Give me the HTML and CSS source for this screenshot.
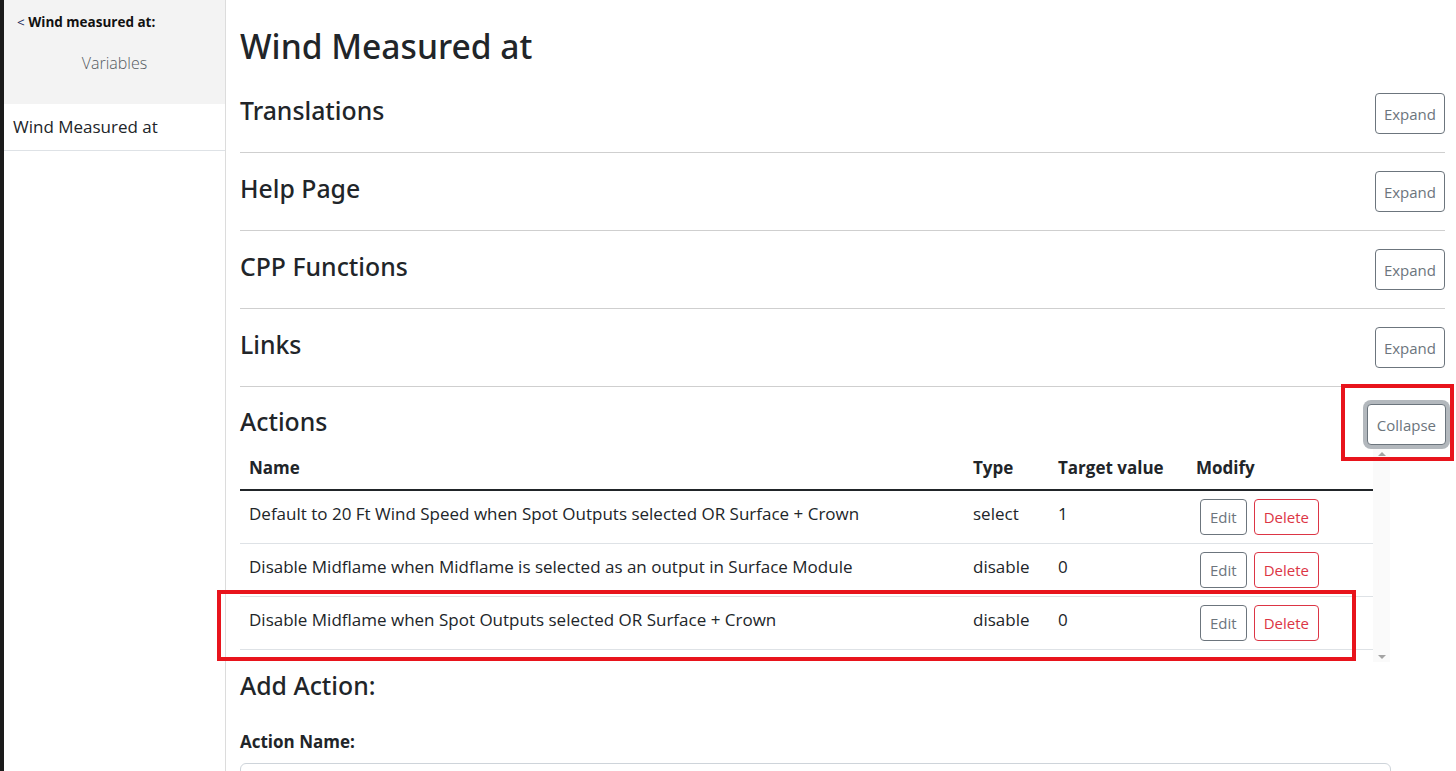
FILE: index.html
```html
<!DOCTYPE html>
<html lang="en">
<head>
<meta charset="utf-8">
<title>Wind Measured at</title>
<link rel="stylesheet" href="styles.css">
</head>
<body>
<div class="app">
  <div class="edge"></div>
  <aside class="sidebar">
    <div class="side-head">
      <div class="back"><span class="lt">&lt;</span> Wind measured at:</div>
      <div class="side-title">Variables</div>
    </div>
    <div class="side-item">Wind Measured at</div>
  </aside>
  <main class="main">
    <h1 class="page-title">Wind Measured at</h1>
    <section class="sec">
      <h3 class="sec-title">Translations</h3>
      <button class="btn btn-outline">Expand</button>
    </section>
    <section class="sec">
      <h3 class="sec-title">Help Page</h3>
      <button class="btn btn-outline">Expand</button>
    </section>
    <section class="sec">
      <h3 class="sec-title">CPP Functions</h3>
      <button class="btn btn-outline">Expand</button>
    </section>
    <section class="sec">
      <h3 class="sec-title">Links</h3>
      <button class="btn btn-outline">Expand</button>
    </section>
    <section class="sec sec-open">
      <div class="sec-head">
        <h3 class="sec-title">Actions</h3>
        <button class="btn btn-outline btn-focus">Collapse</button>
      </div>
      <div class="table-wrap">
        <div class="table-scroll">
          <table class="tbl">
            <thead>
              <tr>
                <th class="c-name">Name</th>
                <th class="c-type">Type</th>
                <th class="c-target">Target value</th>
                <th class="c-mod">Modify</th>
              </tr>
            </thead>
            <tbody>
              <tr>
                <td>Default to 20 Ft Wind Speed when Spot Outputs selected OR Surface + Crown</td>
                <td>select</td>
                <td>1</td>
                <td><div class="mods"><button class="btn btn-sm btn-outline">Edit</button><button class="btn btn-sm btn-danger">Delete</button></div></td>
              </tr>
              <tr>
                <td>Disable Midflame when Midflame is selected as an output in Surface Module</td>
                <td>disable</td>
                <td>0</td>
                <td><div class="mods"><button class="btn btn-sm btn-outline">Edit</button><button class="btn btn-sm btn-danger">Delete</button></div></td>
              </tr>
              <tr>
                <td>Disable Midflame when Spot Outputs selected OR Surface + Crown</td>
                <td>disable</td>
                <td>0</td>
                <td><div class="mods"><button class="btn btn-sm btn-outline">Edit</button><button class="btn btn-sm btn-danger">Delete</button></div></td>
              </tr>
            </tbody>
          </table>
        </div>
        <div class="sbar">
          <span class="arrow arrow-up"></span>
          <span class="arrow arrow-down"></span>
        </div>
      </div>
    </section>
    <h3 class="add-title">Add Action:</h3>
    <label class="lbl" for="actname">Action Name:</label>
    <input class="input" id="actname" type="text">
  </main>
  <div class="mark mark-collapse"></div>
  <div class="mark mark-row"></div>
</div>
</body>
</html>
```

FILE: styles.css
```css
* { box-sizing: border-box; }
html, body { margin: 0; padding: 0; }
body {
  font-family: "Open Sans", "Noto Sans", "Liberation Sans", sans-serif;
  font-size: 17px;
  color: #212529;
  background: #fff;
  overflow: hidden;
}
.app {
  position: relative;
  display: flex;
  height: 771px;
  overflow: hidden;
}
.edge {
  width: 4px;
  flex: none;
  background: #1b1b1b;
}
.sidebar {
  width: 222px;
  flex: none;
  border-right: 1px solid #dcdcdc;
  background: #fff;
}
.side-head {
  height: 104px;
  background: #f3f3f3;
  padding-top: 12px;
}
.back {
  font-size: 13.5px;
  font-weight: 700;
  padding-left: 13px;
  line-height: 20px;
  color: #111;
}
.lt { color: #1a2a5a; font-weight: 400; }
.side-title {
  text-align: center;
  font-size: 16px;
  font-weight: 300;
  color: #555b61;
  margin-top: 20px;
  line-height: 22px;
}
.side-item {
  height: 47px;
  border-bottom: 1px solid #dee2e6;
  padding: 11px 9px;
  font-size: 17px;
  line-height: 24px;
}
.main {
  flex: 1;
  padding: 26px 11px 0 14px;
  min-width: 0;
}
.page-title {
  font-family: "Noto Sans", "Open Sans", sans-serif;
  font-size: 33.6px;
  font-weight: 500;
  line-height: 41px;
  margin: 0 0 8px;
}
.sec {
  display: flex;
  justify-content: space-between;
  align-items: flex-start;
  padding: 18px 0 18px;
  border-bottom: 1px solid #cfcfcf;
}
.sec-title {
  font-family: "Noto Sans", "Open Sans", sans-serif;
  font-size: 24.8px;
  font-weight: 500;
  line-height: 34px;
  margin: 0;
}
.btn {
  font-family: inherit;
  background: #fff;
  border: 1px solid #6c757d;
  color: #6c757d;
  border-radius: 4px;
  font-size: 15px;
  height: 41px;
  padding: 0 8px;
  cursor: pointer;
}
.btn-focus {
  box-shadow: 0 0 0 4px #b3b8bd;
  margin-right: -1px;
  padding: 0 9px;
}
.sec-open {
  display: block;
  border-bottom: none;
  padding: 17px 0 0;
}
.sec-head {
  display: flex;
  justify-content: space-between;
  align-items: flex-start;
}
.table-wrap {
  display: flex;
  width: 1150px;
  height: 213px;
  margin-top: 4px;
}
.table-scroll {
  flex: 1;
  overflow: hidden;
}
.tbl {
  width: 100%;
  border-collapse: collapse;
  table-layout: fixed;
}
.tbl th {
  text-align: left;
  font-weight: 700;
  font-size: 17px;
  padding: 5px 9px 9px;
  height: 41px;
  border-bottom: 2px solid #212529;
}
.tbl td {
  padding: 8px 9px;
  height: 53px;
  border-bottom: 1px solid #dee2e6;
  vertical-align: middle;
  font-size: 17px;
  line-height: 22px;
}
.tbl td:nth-child(-n+3) { padding-bottom: 14px; }
.c-name { width: 724px; }
.c-type { width: 85px; }
.c-target { width: 138px; }
.c-mod { width: auto; }
.mods {
  display: flex;
  gap: 7px;
  padding-left: 4px;
}
.btn-sm {
  height: 36px;
  font-size: 15px;
  padding: 0 9px;
}
.btn-danger {
  border-color: #dc3545;
  color: #dc3545;
}
.sbar {
  width: 17px;
  flex: none;
  background: #fafafa;
  display: flex;
  flex-direction: column;
  justify-content: space-between;
  align-items: center;
  padding: 3px 0 3px;
}
.arrow {
  width: 0;
  height: 0;
  border-left: 4px solid transparent;
  border-right: 4px solid transparent;
}
.arrow-up { border-bottom: 4px solid #a3a3a3; }
.arrow-down { border-top: 4px solid #a3a3a3; }
.add-title {
  font-family: "Noto Sans", "Open Sans", sans-serif;
  font-size: 24.8px;
  font-weight: 500;
  line-height: 34px;
  margin: 6px 0 0;
}
.lbl {
  display: block;
  font-weight: 700;
  font-size: 17px;
  line-height: 24px;
  margin-top: 28px;
}
.input {
  display: block;
  width: 1151px;
  height: 38px;
  margin-top: 9px;
  border: 1px solid #ced4da;
  border-radius: 6px;
  font-family: inherit;
}
.mark {
  position: absolute;
  border: 4px solid #e8141c;
  pointer-events: none;
}
.mark-collapse {
  left: 1341px;
  top: 384px;
  width: 113px;
  height: 77px;
}
.mark-row {
  left: 217px;
  top: 590px;
  width: 1139px;
  height: 71px;
}
```
